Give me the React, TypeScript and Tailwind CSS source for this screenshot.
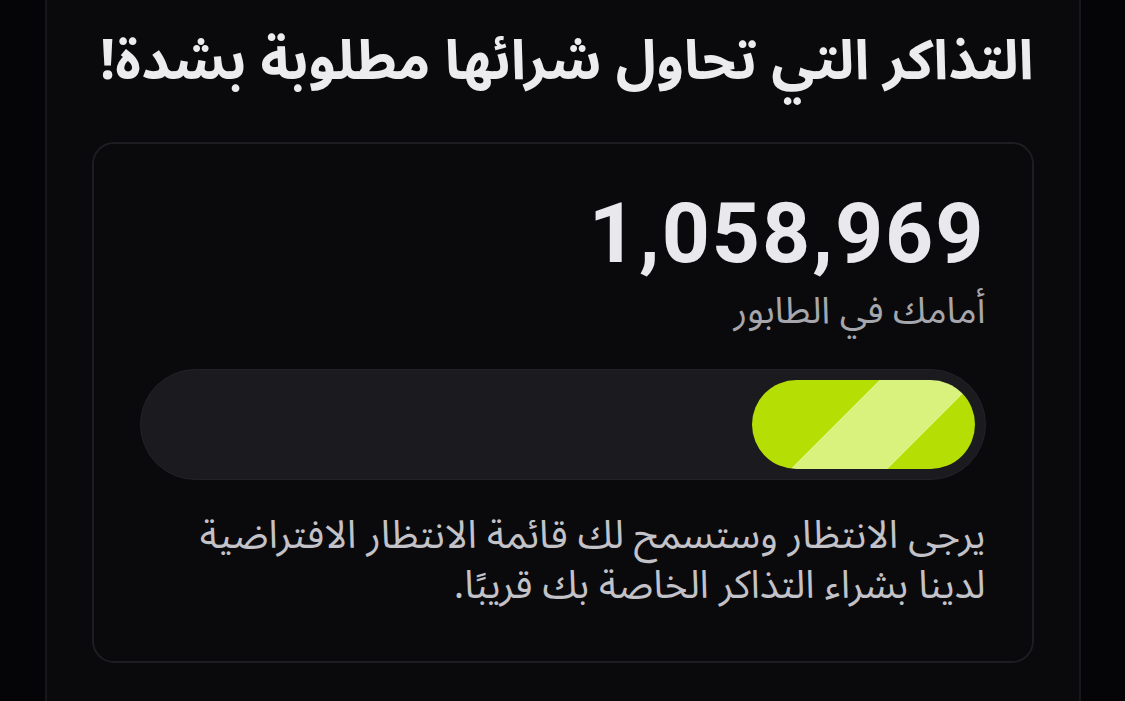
const arabic = { fontFamily: '"Noto Sans Arabic", "DejaVu Sans", sans-serif' };

function QueueProgress({ percent }: { percent: number }) {
  return (
    <div className="h-[111px] w-full rounded-full border border-[#222228] bg-[#1a1a1f] p-[10px] flex">
      <div
        className="h-full rounded-full bg-[linear-gradient(135deg,#b4de04_41%,#d9f27e_41%,#d9f27e_72%,#b4de04_72%)]"
        style={{ width: `${percent}%` }}
      />
    </div>
  );
}

export default function App() {
  return (
    <div className="min-h-[701px] w-full bg-[#050507] flex justify-center overflow-hidden" dir="rtl">
      <div className="w-[1036px] min-h-[701px] border-x-2 border-[#17171b] bg-[#0a0a0c] px-[45px] pt-[22px]">
        <h1
          className="text-[55px] font-bold leading-[80px] text-[#ececef] text-right whitespace-nowrap"
          style={arabic}
        >
          التذاكر التي تحاول شرائها مطلوبة بشدة!
        </h1>
        <div className="mt-[40px] rounded-[22px] border-2 border-[#1d1d22] bg-[#0a0a0c] px-[46px] pt-[45px] pb-[50px]">
          <div
            className="text-right text-[84px] font-bold leading-[90px] tracking-[2px] text-[#e9e9ed]"
            style={{ fontFamily: 'Roboto, "Liberation Sans", sans-serif' }}
            dir="ltr"
          >
            1,058,969
          </div>
          <p className="mt-[4px] text-[37px] leading-[56px] text-[#a6a6ad]" style={arabic}>
            أمامك في الطابور
          </p>
          <div className="mt-[30px]">
            <QueueProgress percent={27} />
          </div>
          <p className="mt-[31px] text-[39px] leading-[50px] text-[#c2c2c8] whitespace-nowrap" style={arabic}>
            يرجى الانتظار وستسمح لك قائمة الانتظار الافتراضية
            <br />
            لدينا بشراء التذاكر الخاصة بك قريبًا.
          </p>
        </div>
      </div>
    </div>
  );
}
